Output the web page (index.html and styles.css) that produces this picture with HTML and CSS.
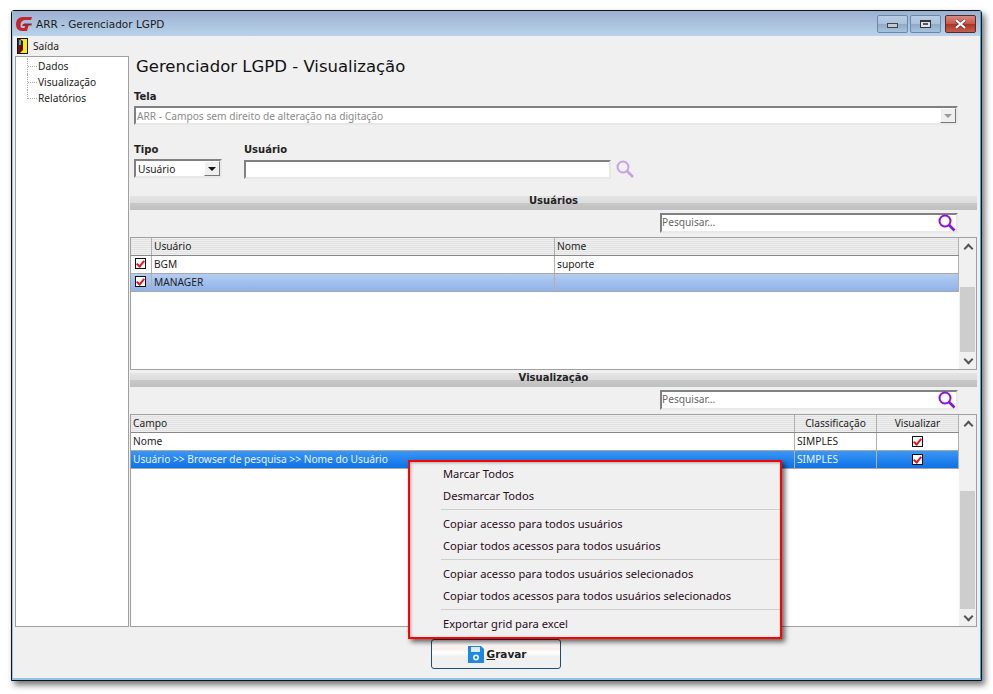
FILE: index.html
```html
<!DOCTYPE html>
<html lang="pt-BR">
<head>
<meta charset="utf-8">
<title>ARR - Gerenciador LGPD</title>
<link rel="stylesheet" href="styles.css">
</head>
<body>
<div class="window">
  <header class="titlebar">
    <svg class="app-logo" width="17" height="16" viewBox="0 0 17 16"><path d="M16 1H6Q0 2 0 8Q0 15 6 15H11L13 8H7L6 10H9L8.500 12H6Q4 11 4.500 8Q5 5 8 4H15Z" fill="#c8232c"/><path d="M8 7.500H16L15.300 9.500H7.500Z" fill="#8d2a30"/></svg>
    <span class="title-text">ARR - Gerenciador LGPD</span>
    <div class="win-buttons">
      <button class="win-btn"><span class="min-glyph"></span></button>
      <button class="win-btn"><span class="max-glyph"></span></button>
      <button class="win-btn close"><svg width="13" height="10" viewBox="0 0 13 10"><path d="M2 1.200L11 8.800M11 1.200L2 8.800" stroke="#333" stroke-width="3.200"/><path d="M2 1.200L11 8.800M11 1.200L2 8.800" stroke="#f4f4f4" stroke-width="2.200"/></svg></button>
    </div>
  </header>
  <nav class="menubar">
    <svg width="11" height="16" viewBox="0 0 11 16"><rect x="0.500" y="0.500" width="10" height="15" fill="#7a1010" stroke="#111"/><rect x="3" y="1" width="7" height="14" fill="#ffee00"/><path d="M3 1L6 3V12L3 15Z" fill="#5a0f0f"/><rect x="2" y="2" width="2" height="5" fill="#18c6d8"/></svg>
    <span>Saída</span>
  </nav>
  <div class="content">
    <aside class="tree">
      <div class="tree-item">Dados</div>
      <div class="tree-item">Visualização</div>
      <div class="tree-item">Relatórios</div>
    </aside>
    <main class="main">
      <h1>Gerenciador LGPD - Visualização</h1>
      <div class="form">
        <label class="label">Tela</label>
        <div class="combo disabled">
          <span>ARR - Campos sem direito de alteração na digitação</span>
          <span class="combo-arrow"><i></i></span>
        </div>
        <div class="form-row">
          <div class="field-tipo">
            <label class="label">Tipo</label>
            <div class="combo">
              <span>Usuário</span>
              <span class="combo-arrow"><i></i></span>
            </div>
          </div>
          <div class="field-user">
            <label class="label">Usuário</label>
            <div class="user-line">
              <div class="input"></div>
              <svg width="20" height="20" viewBox="0 0 20 20"><circle cx="8" cy="8" r="5.500" fill="none" stroke="#c9a0e8" stroke-width="2"/><path d="M12 12L18 18" stroke="#c9a0e8" stroke-width="2.600"/></svg>
            </div>
          </div>
        </div>
      </div>

      <div class="band first">Usuários</div>
      <div class="search-row">
        <div class="search">
          <span>Pesquisar…</span>
          <svg width="18" height="18" viewBox="0 0 18 18"><circle cx="7" cy="7" r="5.500" fill="none" stroke="#8a10dc" stroke-width="2"/><path d="M11 11L16.500 16.500" stroke="#8a10dc" stroke-width="2.600"/></svg>
        </div>
      </div>
      <section class="grid grid-users">
        <div class="grid-body">
          <div class="row head">
            <div class="cell c-check"></div>
            <div class="cell c-user">Usuário</div>
            <div class="cell c-fill">Nome</div>
          </div>
          <div class="row">
            <div class="cell c-check"><span class="check"></span></div>
            <div class="cell c-user">BGM</div>
            <div class="cell c-fill">suporte</div>
          </div>
          <div class="row light-sel">
            <div class="cell c-check"><span class="check"></span></div>
            <div class="cell c-user">MANAGER</div>
            <div class="cell c-fill"></div>
          </div>
        </div>
        <div class="scrollbar">
          <span class="sb-btn up"></span>
          <span class="sb-space small"></span>
          <span class="sb-thumb"></span>
          <span class="sb-btn down"></span>
        </div>
      </section>

      <div class="band">Visualização</div>
      <div class="search-row">
        <div class="search">
          <span>Pesquisar…</span>
          <svg width="18" height="18" viewBox="0 0 18 18"><circle cx="7" cy="7" r="5.500" fill="none" stroke="#8a10dc" stroke-width="2"/><path d="M11 11L16.500 16.500" stroke="#8a10dc" stroke-width="2.600"/></svg>
        </div>
      </div>
      <section class="grid grid-view">
        <div class="grid-body">
          <div class="row head">
            <div class="cell c-fill">Campo</div>
            <div class="cell c-class center">Classificação</div>
            <div class="cell c-vis center">Visualizar</div>
          </div>
          <div class="row">
            <div class="cell c-fill">Nome</div>
            <div class="cell c-class">SIMPLES</div>
            <div class="cell c-vis center"><span class="check"></span></div>
          </div>
          <div class="row strong-sel">
            <div class="cell c-fill">Usuário &gt;&gt; Browser de pesquisa &gt;&gt; Nome do Usuário</div>
            <div class="cell c-class">SIMPLES</div>
            <div class="cell c-vis center"><span class="check"></span></div>
          </div>
        </div>
        <div class="scrollbar">
          <span class="sb-btn up"></span>
          <span class="sb-space large"></span>
          <span class="sb-thumb"></span>
          <span class="sb-btn down"></span>
        </div>
      </section>
    </main>
  </div>
  <footer class="footer">
    <button class="save">
      <svg width="16" height="18" viewBox="0 0 16 18"><path d="M0 1H13L16 4V18H0Z" fill="#1e88e5"/><rect x="3" y="2" width="9" height="5" fill="#dcecf8"/><circle cx="8" cy="12.500" r="3" fill="#e8f3fb"/><circle cx="8" cy="12.500" r="1.200" fill="#1e6fb5"/></svg>
      <span><u>G</u>ravar</span>
    </button>
  </footer>
  <div class="context-menu">
    <div class="menu-item">Marcar Todos</div>
    <div class="menu-item">Desmarcar Todos</div>
    <hr>
    <div class="menu-item">Copiar acesso para todos usuários</div>
    <div class="menu-item">Copiar todos acessos para todos usuários</div>
    <hr>
    <div class="menu-item">Copiar acesso para todos usuários selecionados</div>
    <div class="menu-item">Copiar todos acessos para todos usuários selecionados</div>
    <hr>
    <div class="menu-item">Exportar grid para excel</div>
  </div>
</div>
</body>
</html>
```

FILE: styles.css
```css
* { box-sizing: border-box; }
html, body { margin: 0; height: 100%; background: #fff; }
body {
  padding: 10px 0 0 11px;
  font-family: "Noto Sans", "Liberation Sans", sans-serif;
  font-size: 10.200px;
  color: #222;
  overflow: hidden;
}
.window {
  position: relative;
  width: 971px;
  height: 671px;
  display: flex;
  flex-direction: column;
  background: #f0f0f0;
  border: 1px solid #111;
  border-radius: 3px 3px 0 0;
  box-shadow: 3px 4px 6px rgba(0, 0, 0, .55);
}
.titlebar {
  height: 25px;
  flex: none;
  display: flex;
  align-items: center;
  padding: 0 0 0 3px;
  background: linear-gradient(#9bb0d0, #a9c0dc 45%, #b7d3e9);
  border-left: 1px solid #9cc4e6;
  border-right: 1px solid #38a8e0;
  font-family: "DejaVu Sans", sans-serif;
  font-size: 10.500px;
  color: #1c1c1c;
}
.app-logo { margin-right: 3px; }
.win-buttons { margin-left: auto; margin-right: 4px; align-self: flex-start; margin-top: 4px; display: flex; gap: 2px; }
.win-btn {
  width: 31px;
  height: 18px;
  padding: 0;
  border: 1px solid #6d87a8;
  border-radius: 2px;
  background: linear-gradient(#b9cde3, #a9c2dc 50%, #8fa9c8 52%, #a6c4de);
  display: flex;
  align-items: center;
  justify-content: center;
}
.win-btn.close { margin-left: 2px; background: linear-gradient(#d88a80, #c9564a 50%, #b03222 52%, #c5604f); border-color: #5a2a26; }
.min-glyph { width: 11px; height: 5px; margin-top: 3px; background: #c4c8d0; border: 1px solid #444; }
.max-glyph { width: 11px; height: 8px; background: #dde3ea; border: 1px solid #333; border-top-width: 2px; display: block; position: relative; }
.max-glyph::after { content: ""; display: block; width: 5px; height: 2px; margin: 1px auto; background: #556; }
.menubar {
  height: 20px;
  flex: none;
  display: flex;
  align-items: center;
  gap: 5px;
  padding-left: 4px;
  border-left: 1px solid #9cc4e6;
  border-right: 1px solid #38a8e0;
}
.content {
  height: 571px;
  flex: none;
  display: flex;
  gap: 1px;
  padding: 0 3px 0 2px;
  border-left: 1px solid #9cc4e6;
  border-right: 1px solid #38a8e0;
}
.tree {
  width: 114px;
  flex: none;
  background: #fff;
  border: 1px solid #a0a0a0;
  padding: 1px 0 0 22px;
}
.tree-item { height: 16px; line-height: 16px; position: relative; }
.tree-item::before {
  content: "";
  position: absolute;
  left: -10px;
  top: 8px;
  width: 9px;
  border-top: 1px dotted #aaa;
}
.tree-item::after {
  content: "";
  position: absolute;
  left: -11px;
  top: 0;
  height: 16px;
  border-left: 1px dotted #aaa;
}
.tree-item:last-child::after { height: 9px; }
.main { flex: 1; min-width: 0; display: flex; flex-direction: column; }
h1 {
  margin: 0;
  padding: 1px 0 0 6px;
  height: 31px;
  line-height: 20px;
  font-family: "DejaVu Sans", sans-serif;
  font-size: 16.500px;
  font-weight: 400;
  color: #111;
}
.form { padding: 3px 19px 0 4px; }
.label { display: block; font-family: "DejaVu Sans", sans-serif; font-size: 10px; font-weight: 700; height: 14px; line-height: 14px; color: #222; }
.combo {
  height: 19px;
  margin-top: 2px;
  display: flex;
  align-items: center;
  justify-content: space-between;
  background: #fff;
  border: 2px solid #808080;
  border-right-color: #e8e8e8;
  border-bottom-color: #e8e8e8;
  padding-left: 2px;
}
.combo.disabled { color: #8a8a8a; padding-left: 1px; }
.combo-arrow {
  width: 16px;
  height: 15px;
  background: #efefef;
  border: 1px solid;
  border-color: #fff #777 #777 #fff;
  display: flex;
  align-items: center;
  justify-content: center;
  flex: none;
}
.combo-arrow i { width: 0; height: 0; border: 4px solid transparent; border-top: 4px solid #111; border-bottom: 0; }
.disabled .combo-arrow i { border-top-color: #999; }
.form-row { display: flex; gap: 22px; margin-top: 18px; }
.field-tipo { width: 88px; }
.field-user { flex: 1; }
.user-line { display: flex; align-items: center; gap: 4px; margin-top: 2px; }
.input {
  width: 367px;
  height: 19px;
  background: #fff;
  border: 2px solid #808080;
  border-right-color: #e8e8e8;
  border-bottom-color: #e8e8e8;
}
.band {
  height: 14px;
  line-height: 10px;
  margin-top: 3px;
  flex: none;
  text-align: center;
  font-family: "DejaVu Sans", sans-serif;
  font-size: 10px;
  font-weight: 700;
  color: #222;
  background: linear-gradient(#e4e4e4 0, #dcdcdc 50%, #c8c8c8 52%, #c0c0c0);
}
.band.first { margin-top: 17px; }
.search-row { flex: none; height: 27px; padding: 3px 19px 0 0; display: flex; justify-content: flex-end; }
.search {
  width: 298px;
  height: 20px;
  display: flex;
  align-items: flex-start;
  justify-content: space-between;
  background: #fff;
  border: 2px solid #808080;
  border-right-color: #e8e8e8;
  border-bottom-color: #e8e8e8;
  color: #666;
  line-height: 15px;
}
.search svg { margin-top: -1px; }
.grid { display: flex; border: 1px solid #a0a0a0; background: #fff; flex: none; }
.grid-users { height: 133px; }
.grid-view { flex: 1; }
.grid-body { flex: 1; min-width: 0; }
.row { display: flex; height: 18px; border-bottom: 1px solid #a8a8a8; }
.row.head { height: 18px; background: repeating-linear-gradient(#efefef 0 1px, #e2e2e2 1px 2px); border-bottom: 1px solid #888; }
.cell {
  line-height: 17px;
  padding-left: 2px;
  border-right: 1px solid #b0b0b0;
  white-space: nowrap;
  overflow: hidden;
  color: #222;
}
.c-check { width: 21px; display: flex; align-items: center; justify-content: center; padding: 0 2px 0 0; }
.c-user { width: 403px; }
.c-fill { flex: 1; min-width: 0; }
.c-class { width: 82px; }
.c-vis { width: 82px; }
.center { text-align: center; padding-left: 0; }
.light-sel { background: linear-gradient(#b4cdf0, #8fb2e8); }
.strong-sel { background: linear-gradient(#3a97f5, #0f72e6); }
.strong-sel .cell { color: #eaf3ff; }
.check {
  display: inline-block;
  width: 11px;
  height: 11px;
  background: #fff;
  border: 1px solid #111;
  vertical-align: middle;
  margin-top: -2px;
  position: relative;
}
.check::after {
  content: "";
  position: absolute;
  left: 2px;
  top: 0;
  width: 3px;
  height: 6px;
  border: solid #e8141c;
  border-width: 0 2px 2px 0;
  transform: rotate(40deg);
}
.scrollbar { width: 17px; flex: none; display: flex; flex-direction: column; background: #f0f0f0; padding: 0 1px 0 0; }
.sb-btn { height: 18px; flex: none; position: relative; }
.sb-btn.down { height: 17px; }
.sb-btn::after {
  content: "";
  position: absolute;
  left: 6px;
  width: 5px;
  height: 5px;
  border: solid #555;
  border-width: 2px 0 0 2px;
  transform: rotate(45deg);
  top: 7px;
}
.sb-btn.down::after { transform: rotate(225deg); top: 4px; }
.sb-space.small { height: 31px; flex: none; }
.sb-space.large { height: 58px; flex: none; }
.sb-thumb { flex: 1; background: #cdcdcd; margin-left: 1px; }
.footer { flex: 1; display: flex; padding: 12px 0 0 418px; border-left: 1px solid #9cc4e6; border-right: 1px solid #38a8e0; border-bottom: 2px solid #8fc4ea; }
.save {
  width: 130px;
  height: 30px;
  display: flex;
  align-items: center;
  justify-content: center;
  gap: 3px;
  padding: 0 0 0 2px;
  border: 1px solid #1b4e74;
  border-radius: 3px;
  background: linear-gradient(#f2f2f2 0, #fff 18%, #fbeee8 32%, #fff 45%, #f0f0f0 60%);
  font: 700 10.500px "DejaVu Sans", sans-serif;
  color: #222;
}
.context-menu {
  position: absolute;
  left: 396px;
  top: 449px;
  width: 374px;
  height: 179px;
  padding: 1px 0 0;
  background: #f0f0f0;
  border: 2px solid #f00;
  box-shadow: 3px 3px 5px rgba(0, 0, 0, .6), inset 1px 1px 3px rgba(0,0,0,.3);
  color: #2a0a1a;
  font-size: 11.150px;
}
.menu-item { height: 22px; line-height: 21px; padding-left: 33px; white-space: nowrap; }
.context-menu hr { height: 1px; margin: 2px 0 3px 31px; border: 0; background: #cfcfcf; }
```
